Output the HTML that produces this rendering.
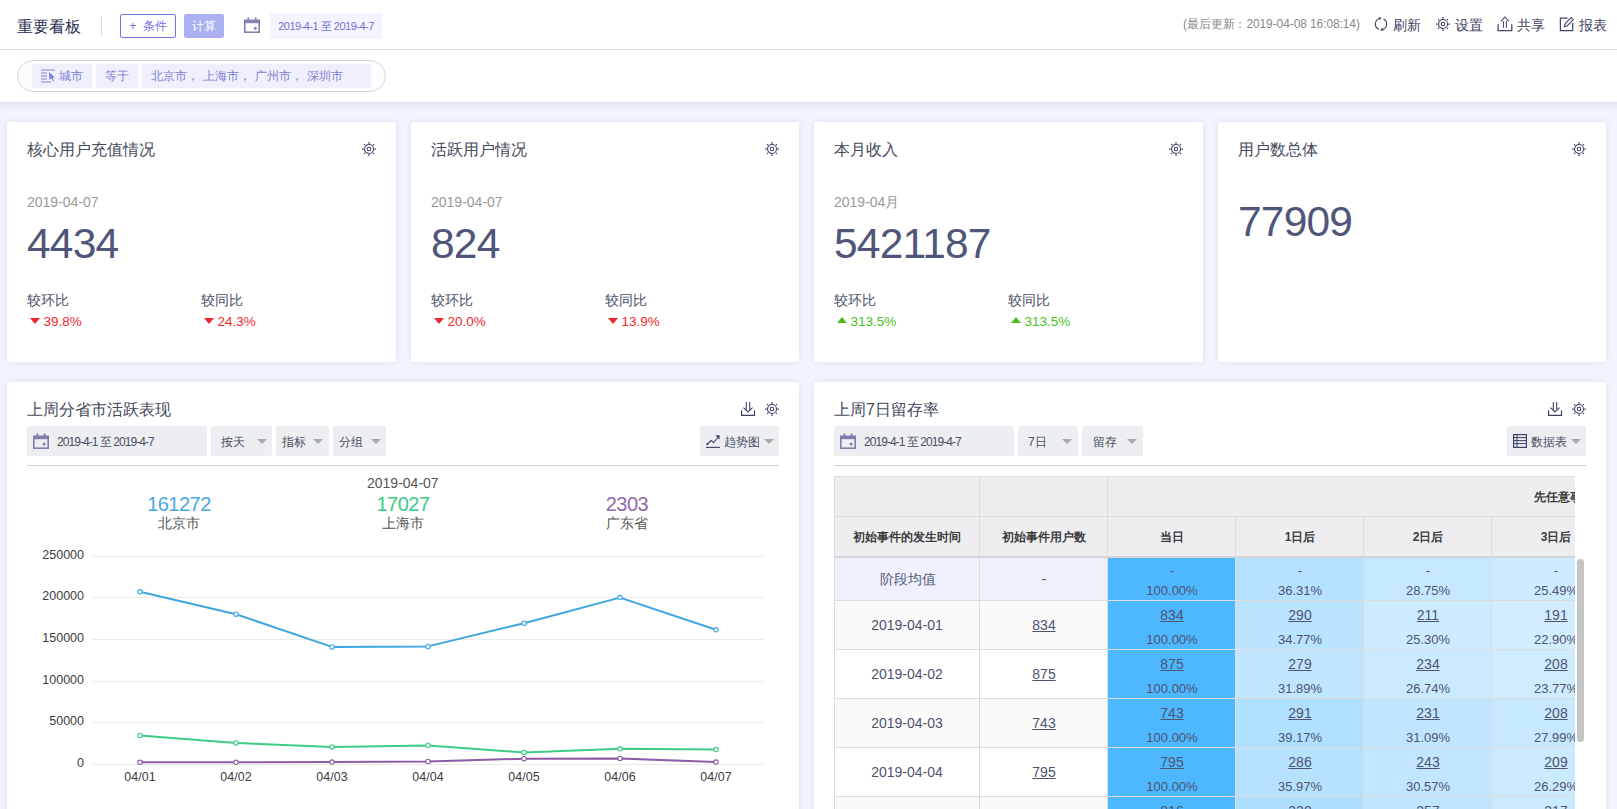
<!DOCTYPE html>
<html><head><meta charset="utf-8">
<style>
*{margin:0;padding:0;box-sizing:border-box}
html,body{width:1617px;height:809px;overflow:hidden}
body{background:#f2f5fd;font-family:"Liberation Sans",sans-serif;color:#333;position:relative}
.abs{position:absolute;white-space:nowrap}
#hdr{position:absolute;left:0;top:0;width:1617px;height:50px;background:#fff;border-bottom:1px solid #dcdce0}
#flt{position:absolute;left:0;top:50px;width:1617px;height:52px;background:#fff}
#shd{position:absolute;left:0;top:102px;width:1617px;height:20px;background:linear-gradient(#dde0e8 0px,#e8ebf3 3px,#f1f4fc 9px,#f2f5fd 14px)}
.card{position:absolute;background:#fff;border-radius:2px;box-shadow:0 0 6px rgba(200,205,225,.6)}
.ttl{position:absolute;font-size:16px;line-height:16px;color:#444a5c;white-space:nowrap}
.date{position:absolute;font-size:14px;line-height:14px;color:#999;white-space:nowrap}
.big{position:absolute;font-size:42.5px;line-height:42px;color:#50557a;white-space:nowrap;letter-spacing:-0.8px}
.lbl{position:absolute;font-size:14px;line-height:14px;color:#4c5068;white-space:nowrap}
.pct{position:absolute;font-size:13.5px;line-height:14px;white-space:nowrap}
.red{color:#f0282d}.grn{color:#4cbf1e}
.tri-d{position:absolute;width:0;height:0;border-left:5.5px solid transparent;border-right:5.5px solid transparent;border-top:6px solid #f0282d}
.tri-u{position:absolute;width:0;height:0;border-left:5.5px solid transparent;border-right:5.5px solid transparent;border-bottom:6px solid #4cbf1e}
.hact{position:absolute;top:17.5px;font-size:14px;line-height:14px;color:#3d4163}
.tag{position:absolute;top:14px;height:24px;background:#f0f0fd;border-radius:2px;color:#7c80d4;font-size:12px;line-height:24px}
.ctl{position:absolute;top:426px;height:30px;background:#eceef2;border-radius:2px;font-size:12px;line-height:30px;color:#4a4e62;white-space:nowrap}
.ctl span{position:absolute;top:1px}
.ctl .dd{position:absolute;top:13px;width:0;height:0;border-left:5px solid transparent;border-right:5px solid transparent;border-top:5px solid #aaa}
.dvd{position:absolute;top:465px;height:1px;background:#cfcfd4}
.ic{position:absolute;overflow:visible}
</style></head><body>
<div id="hdr">
<div class="abs" style="left:17px;top:18.5px;font-size:16px;line-height:16px;font-weight:500;color:#2d3052">重要看板</div>
<div class="abs" style="left:101px;top:16px;width:1px;height:20px;background:#d8d8d8"></div>
<div class="abs" style="left:120px;top:14px;width:56px;height:24px;border:1px solid #6f74e0;border-radius:2px;color:#6f74e0;font-size:12px;line-height:22px;text-align:center">+&nbsp; 条件</div>
<div class="abs" style="left:184px;top:14px;width:40px;height:24px;background:#aab0f2;border-radius:2px;color:#fff;font-size:12px;line-height:24px;text-align:center">计算</div>
<svg class="ic" style="left:244px;top:17px" width="16" height="16" viewBox="0 0 16 16"><rect x="0.8" y="3.3" width="14.4" height="11.9" fill="none" stroke="#8284b0" stroke-width="1.6"/><rect x="0.8" y="3" width="14.4" height="3.2" fill="#8284b0"/><rect x="3.5" y="0.3" width="1.6" height="3" fill="#8284b0"/><rect x="10.9" y="0.3" width="1.6" height="3" fill="#8284b0"/><rect x="10" y="10" width="2.6" height="2.6" fill="#8284b0"/></svg>
<div class="abs" style="left:270px;top:13px;width:112px;height:26px;background:#f3f4fd;color:#7570d8;font-size:11px;line-height:27px;text-align:center;letter-spacing:-0.5px">2019-4-1 至 2019-4-7</div>
<div class="abs" style="left:1183px;top:18px;font-size:12px;line-height:12px;color:#8a8a8a;letter-spacing:-0.1px">(最后更新：2019-04-08 16:08:14)</div>
<svg class="ic" style="left:1374px;top:17px" width="14" height="14" viewBox="0 0 14 14"><path d="M6.03 1.49A5.6 5.6 0 0 0 5.08 12.26M9.37 1.92A5.6 5.6 0 0 1 7.97 12.51" fill="none" stroke="#41456a" stroke-width="1.15"/><path d="M7.3 0.2L4.2 0.5L6.3 3.3Z M6.6 13.9L7.3 10.8L10 13.3Z" fill="#41456a"/></svg>
<div class="hact" style="left:1393px">刷新</div>
<svg class="ic" style="left:1436px;top:17px" width="14" height="14" viewBox="0 0 14 14"><circle cx="7" cy="7" r="4.5" fill="none" stroke="#3c4168" stroke-width="1.05"/><circle cx="7" cy="7" r="1.8" fill="none" stroke="#3c4168" stroke-width="1.05"/><g stroke="#3c4168" stroke-width="1.25"><path d="M7 0.1V1.7M7 12.3V13.9M0.1 7H1.7M12.3 7H13.9M2.1 2.1L3.1 3.1M10.9 10.9L11.9 11.9M2.1 11.9L3.1 10.9M10.9 3.1L11.9 2.1"/></g></svg>
<div class="hact" style="left:1455px">设置</div>
<svg class="ic" style="left:1497px;top:16px" width="15" height="15" viewBox="0 0 15 15"><path d="M1.1 8.2V14.7H14.8V8.2" fill="none" stroke="#41456a" stroke-width="1.25"/><path d="M6.4 5V11.8M9.4 5V11.8M3.9 5.4L7.9 1L11.9 5.4" fill="none" stroke="#41456a" stroke-width="1.05"/></svg>
<div class="hact" style="left:1517px">共享</div>
<svg class="ic" style="left:1559px;top:16px" width="15" height="15" viewBox="0 0 15 15"><path d="M8.6 2.2H1.4V14.7H13.7V7" fill="none" stroke="#41456a" stroke-width="1.25"/><path d="M5.3 10.6L6.2 7.6L12.2 1.6L14.3 3.7L8.3 9.7Z" fill="none" stroke="#41456a" stroke-width="1.05"/></svg>
<div class="hact" style="left:1579px">报表</div>
</div>
<div id="flt">
<div class="abs" style="left:17px;top:10px;width:369px;height:32px;border:1px solid #d6d6dc;border-radius:16px;background:#fcfcff"></div>
<div class="tag" style="left:32px;width:60px"><svg class="abs" style="left:9px;top:5px" width="15" height="14" viewBox="0 0 15 14"><path d="M0 1H14M0 4H6M0 7H6M0 10H6M0 13H10" stroke="#7c80d4" stroke-width="1.2"/><path d="M8 3L14 8.5L11.5 8.8L13 12L12 12.5L10.5 9.3L8.5 11Z" fill="#7c80d4"/></svg><span class="abs" style="left:27px;top:0">城市</span></div>
<div class="tag" style="left:96px;width:42px;text-align:center">等于</div>
<div class="tag" style="left:142px;width:229px;padding-left:9px">北京市<span style="letter-spacing:4px">，</span>上海市<span style="letter-spacing:4px">，</span>广州市<span style="letter-spacing:4px">，</span>深圳市</div>
</div>
<div id="shd"></div>
<div class="card" style="left:7px;top:122px;width:389px;height:240px">
<svg class="ic" style="left:355px;top:20px" width="14" height="14" viewBox="0 0 14 14"><circle cx="7" cy="7" r="4.5" fill="none" stroke="#3c4168" stroke-width="1.05"/><circle cx="7" cy="7" r="1.8" fill="none" stroke="#3c4168" stroke-width="1.05"/><g stroke="#3c4168" stroke-width="1.25"><path d="M7 0.1V1.7M7 12.3V13.9M0.1 7H1.7M12.3 7H13.9M2.1 2.1L3.1 3.1M10.9 10.9L11.9 11.9M2.1 11.9L3.1 10.9M10.9 3.1L11.9 2.1"/></g></svg>
<div class="ttl" style="left:20px;top:20px">核心用户充值情况</div>
<div class="date" style="left:20px;top:73px">2019-04-07</div>
<div class="big" style="left:20px;top:101px">4434</div>
<div class="lbl" style="left:20px;top:171px">较环比</div>
<div class="tri-d" style="left:23px;top:195.5px"></div><div class="pct red" style="left:36.5px;top:193px">39.8%</div>
<div class="lbl" style="left:194px;top:171px">较同比</div>
<div class="tri-d" style="left:197px;top:195.5px"></div><div class="pct red" style="left:210.5px;top:193px">24.3%</div>
</div>
<div class="card" style="left:411px;top:122px;width:388px;height:240px">
<svg class="ic" style="left:354px;top:20px" width="14" height="14" viewBox="0 0 14 14"><circle cx="7" cy="7" r="4.5" fill="none" stroke="#3c4168" stroke-width="1.05"/><circle cx="7" cy="7" r="1.8" fill="none" stroke="#3c4168" stroke-width="1.05"/><g stroke="#3c4168" stroke-width="1.25"><path d="M7 0.1V1.7M7 12.3V13.9M0.1 7H1.7M12.3 7H13.9M2.1 2.1L3.1 3.1M10.9 10.9L11.9 11.9M2.1 11.9L3.1 10.9M10.9 3.1L11.9 2.1"/></g></svg>
<div class="ttl" style="left:20px;top:20px">活跃用户情况</div>
<div class="date" style="left:20px;top:73px">2019-04-07</div>
<div class="big" style="left:20px;top:101px">824</div>
<div class="lbl" style="left:20px;top:171px">较环比</div>
<div class="tri-d" style="left:23px;top:195.5px"></div><div class="pct red" style="left:36.5px;top:193px">20.0%</div>
<div class="lbl" style="left:194px;top:171px">较同比</div>
<div class="tri-d" style="left:197px;top:195.5px"></div><div class="pct red" style="left:210.5px;top:193px">13.9%</div>
</div>
<div class="card" style="left:814px;top:122px;width:389px;height:240px">
<svg class="ic" style="left:355px;top:20px" width="14" height="14" viewBox="0 0 14 14"><circle cx="7" cy="7" r="4.5" fill="none" stroke="#3c4168" stroke-width="1.05"/><circle cx="7" cy="7" r="1.8" fill="none" stroke="#3c4168" stroke-width="1.05"/><g stroke="#3c4168" stroke-width="1.25"><path d="M7 0.1V1.7M7 12.3V13.9M0.1 7H1.7M12.3 7H13.9M2.1 2.1L3.1 3.1M10.9 10.9L11.9 11.9M2.1 11.9L3.1 10.9M10.9 3.1L11.9 2.1"/></g></svg>
<div class="ttl" style="left:20px;top:20px">本月收入</div>
<div class="date" style="left:20px;top:73px">2019-04月</div>
<div class="big" style="left:20px;top:101px">5421187</div>
<div class="lbl" style="left:20px;top:171px">较环比</div>
<div class="tri-u" style="left:22.5px;top:194.5px"></div><div class="pct grn" style="left:36.5px;top:193px">313.5%</div>
<div class="lbl" style="left:194px;top:171px">较同比</div>
<div class="tri-u" style="left:196.5px;top:194.5px"></div><div class="pct grn" style="left:210.5px;top:193px">313.5%</div>
</div>
<div class="card" style="left:1218px;top:122px;width:388px;height:240px">
<svg class="ic" style="left:354px;top:20px" width="14" height="14" viewBox="0 0 14 14"><circle cx="7" cy="7" r="4.5" fill="none" stroke="#3c4168" stroke-width="1.05"/><circle cx="7" cy="7" r="1.8" fill="none" stroke="#3c4168" stroke-width="1.05"/><g stroke="#3c4168" stroke-width="1.25"><path d="M7 0.1V1.7M7 12.3V13.9M0.1 7H1.7M12.3 7H13.9M2.1 2.1L3.1 3.1M10.9 10.9L11.9 11.9M2.1 11.9L3.1 10.9M10.9 3.1L11.9 2.1"/></g></svg>
<div class="ttl" style="left:20px;top:20px">用户数总体</div>
<div class="big" style="left:20px;top:79px">77909</div>
</div>
<div class="card" style="left:7px;top:382px;width:792px;height:440px"></div>
<div class="ttl" style="left:27px;top:402px">上周分省市活跃表现</div>
<svg class="ic" style="left:741px;top:402px" width="14" height="14" viewBox="0 0 14 14"><path d="M0.6 8.3V13.4H13.5V8.3" fill="none" stroke="#3c4168" stroke-width="1.2"/><path d="M5.3 0V7.6M8.7 0V7.6M2.4 5.6L7 10L11.6 5.6" fill="none" stroke="#3c4168" stroke-width="1.1"/></svg>
<svg class="ic" style="left:765px;top:402px" width="14" height="14" viewBox="0 0 14 14"><circle cx="7" cy="7" r="4.5" fill="none" stroke="#3c4168" stroke-width="1.05"/><circle cx="7" cy="7" r="1.8" fill="none" stroke="#3c4168" stroke-width="1.05"/><g stroke="#3c4168" stroke-width="1.25"><path d="M7 0.1V1.7M7 12.3V13.9M0.1 7H1.7M12.3 7H13.9M2.1 2.1L3.1 3.1M10.9 10.9L11.9 11.9M2.1 11.9L3.1 10.9M10.9 3.1L11.9 2.1"/></g></svg>
<div class="ctl" style="left:27px;width:180px"><svg class="ic" style="left:6px;top:7px" width="16" height="16" viewBox="0 0 16 16"><rect x="0.8" y="3.3" width="14.4" height="11.9" fill="none" stroke="#7d7fa8" stroke-width="1.6"/><rect x="0.8" y="3" width="14.4" height="3.2" fill="#7d7fa8"/><rect x="3.5" y="0.5" width="1.8" height="3" fill="#7d7fa8"/><rect x="10.7" y="0.5" width="1.8" height="3" fill="#7d7fa8"/><rect x="9.8" y="9.8" width="2.6" height="2.6" fill="#7d7fa8"/></svg><span style="left:30px;letter-spacing:-0.95px">2019-4-1 至 2019-4-7</span></div>
<div class="ctl" style="left:211px;width:61px"><span style="left:10px">按天</span><i class="dd" style="left:46px"></i></div>
<div class="ctl" style="left:276px;width:53px"><span style="left:6px">指标</span><i class="dd" style="left:37px"></i></div>
<div class="ctl" style="left:333px;width:53px"><span style="left:6px">分组</span><i class="dd" style="left:38px"></i></div>
<div class="ctl" style="left:700px;width:79px"><svg class="ic" style="left:6px;top:8px" width="14" height="14" viewBox="0 0 14 14"><path d="M0 13.4H14" stroke="#3c4168" stroke-width="1.1"/><path d="M1 10.5L5 6.5L7.5 8.5L12.5 3" fill="none" stroke="#3c4168" stroke-width="1.1"/><circle cx="1.2" cy="10.3" r="1" fill="#3c4168"/><path d="M9.3 1.2H13.6V5.5Z" fill="#3c4168"/></svg><span style="left:24px">趋势图</span><i class="dd" style="left:64px"></i></div>
<div class="dvd" style="left:27px;width:752px"></div>
<div class="abs" style="left:367px;top:476px;font-size:14px;line-height:14px;color:#555">2019-04-07</div>
<div class="abs" style="left:129px;top:494px;width:100px;text-align:center;font-size:20px;line-height:20px;color:#4aa8e2;letter-spacing:-0.5px">161272</div>
<div class="abs" style="left:129px;top:516px;width:100px;text-align:center;font-size:14px;line-height:14px;color:#555">北京市</div>
<div class="abs" style="left:353px;top:494px;width:100px;text-align:center;font-size:20px;line-height:20px;color:#3dcb86;letter-spacing:-0.5px">17027</div>
<div class="abs" style="left:353px;top:516px;width:100px;text-align:center;font-size:14px;line-height:14px;color:#555">上海市</div>
<div class="abs" style="left:577px;top:494px;width:100px;text-align:center;font-size:20px;line-height:20px;color:#8d6aa8;letter-spacing:-0.5px">2303</div>
<div class="abs" style="left:577px;top:516px;width:100px;text-align:center;font-size:14px;line-height:14px;color:#555">广东省</div>
<svg class="abs" style="left:0;top:0" width="810" height="809" viewBox="0 0 810 809">
<g font-family="Liberation Sans, sans-serif" font-size="12.5" fill="#3d3d3d"><text x="84" y="558.6" text-anchor="end">250000</text><text x="84" y="599.6" text-anchor="end">200000</text><text x="84" y="641.6" text-anchor="end">150000</text><text x="84" y="683.6" text-anchor="end">100000</text><text x="84" y="724.6" text-anchor="end">50000</text><text x="84" y="766.6" text-anchor="end">0</text><text x="140" y="780.5" text-anchor="middle">04/01</text><text x="236" y="780.5" text-anchor="middle">04/02</text><text x="332" y="780.5" text-anchor="middle">04/03</text><text x="428" y="780.5" text-anchor="middle">04/04</text><text x="524" y="780.5" text-anchor="middle">04/05</text><text x="620" y="780.5" text-anchor="middle">04/06</text><text x="716" y="780.5" text-anchor="middle">04/07</text></g>
<g><line x1="92" y1="556.5" x2="764" y2="556.5" stroke="#ebebeb" stroke-width="1"/><line x1="92" y1="597.5" x2="764" y2="597.5" stroke="#ebebeb" stroke-width="1"/><line x1="92" y1="639.5" x2="764" y2="639.5" stroke="#ebebeb" stroke-width="1"/><line x1="92" y1="681.5" x2="764" y2="681.5" stroke="#ebebeb" stroke-width="1"/><line x1="92" y1="722.5" x2="764" y2="722.5" stroke="#ebebeb" stroke-width="1"/><line x1="92" y1="764.5" x2="764" y2="764.5" stroke="#ebebeb" stroke-width="1"/></g>
<polyline points="140,762.3 236,762.3 332,762.1 428,761.5 524,758.7 620,758.4 716,762.1" fill="none" stroke="#8d5aa6" stroke-width="2" stroke-linejoin="round"/><circle cx="140" cy="762.3" r="2.2" fill="#fff" stroke="#8d5aa6" stroke-width="1.1"/><circle cx="236" cy="762.3" r="2.2" fill="#fff" stroke="#8d5aa6" stroke-width="1.1"/><circle cx="332" cy="762.1" r="2.2" fill="#fff" stroke="#8d5aa6" stroke-width="1.1"/><circle cx="428" cy="761.5" r="2.2" fill="#fff" stroke="#8d5aa6" stroke-width="1.1"/><circle cx="524" cy="758.7" r="2.2" fill="#fff" stroke="#8d5aa6" stroke-width="1.1"/><circle cx="620" cy="758.4" r="2.2" fill="#fff" stroke="#8d5aa6" stroke-width="1.1"/><circle cx="716" cy="762.1" r="2.2" fill="#fff" stroke="#8d5aa6" stroke-width="1.1"/><polyline points="140,735.4 236,742.9 332,746.9 428,745.5 524,752.4 620,748.8 716,749.6" fill="none" stroke="#3dcb86" stroke-width="2" stroke-linejoin="round"/><circle cx="140" cy="735.4" r="2.2" fill="#fff" stroke="#3dcb86" stroke-width="1.1"/><circle cx="236" cy="742.9" r="2.2" fill="#fff" stroke="#3dcb86" stroke-width="1.1"/><circle cx="332" cy="746.9" r="2.2" fill="#fff" stroke="#3dcb86" stroke-width="1.1"/><circle cx="428" cy="745.5" r="2.2" fill="#fff" stroke="#3dcb86" stroke-width="1.1"/><circle cx="524" cy="752.4" r="2.2" fill="#fff" stroke="#3dcb86" stroke-width="1.1"/><circle cx="620" cy="748.8" r="2.2" fill="#fff" stroke="#3dcb86" stroke-width="1.1"/><circle cx="716" cy="749.6" r="2.2" fill="#fff" stroke="#3dcb86" stroke-width="1.1"/><polyline points="140,591.8 236,614.2 332,646.9 428,646.4 524,623.2 620,597.6 716,629.8" fill="none" stroke="#3ea6df" stroke-width="2" stroke-linejoin="round"/><circle cx="140" cy="591.8" r="2.2" fill="#fff" stroke="#3ea6df" stroke-width="1.1"/><circle cx="236" cy="614.2" r="2.2" fill="#fff" stroke="#3ea6df" stroke-width="1.1"/><circle cx="332" cy="646.9" r="2.2" fill="#fff" stroke="#3ea6df" stroke-width="1.1"/><circle cx="428" cy="646.4" r="2.2" fill="#fff" stroke="#3ea6df" stroke-width="1.1"/><circle cx="524" cy="623.2" r="2.2" fill="#fff" stroke="#3ea6df" stroke-width="1.1"/><circle cx="620" cy="597.6" r="2.2" fill="#fff" stroke="#3ea6df" stroke-width="1.1"/><circle cx="716" cy="629.8" r="2.2" fill="#fff" stroke="#3ea6df" stroke-width="1.1"/>
</svg>
<div class="card" style="left:814px;top:382px;width:792px;height:440px"></div>
<div class="ttl" style="left:834px;top:402px">上周7日留存率</div>
<svg class="ic" style="left:1548px;top:402px" width="14" height="14" viewBox="0 0 14 14"><path d="M0.6 8.3V13.4H13.5V8.3" fill="none" stroke="#3c4168" stroke-width="1.2"/><path d="M5.3 0V7.6M8.7 0V7.6M2.4 5.6L7 10L11.6 5.6" fill="none" stroke="#3c4168" stroke-width="1.1"/></svg>
<svg class="ic" style="left:1572px;top:402px" width="14" height="14" viewBox="0 0 14 14"><circle cx="7" cy="7" r="4.5" fill="none" stroke="#3c4168" stroke-width="1.05"/><circle cx="7" cy="7" r="1.8" fill="none" stroke="#3c4168" stroke-width="1.05"/><g stroke="#3c4168" stroke-width="1.25"><path d="M7 0.1V1.7M7 12.3V13.9M0.1 7H1.7M12.3 7H13.9M2.1 2.1L3.1 3.1M10.9 10.9L11.9 11.9M2.1 11.9L3.1 10.9M10.9 3.1L11.9 2.1"/></g></svg>
<div class="ctl" style="left:834px;width:180px"><svg class="ic" style="left:6px;top:7px" width="16" height="16" viewBox="0 0 16 16"><rect x="0.8" y="3.3" width="14.4" height="11.9" fill="none" stroke="#7d7fa8" stroke-width="1.6"/><rect x="0.8" y="3" width="14.4" height="3.2" fill="#7d7fa8"/><rect x="3.5" y="0.5" width="1.8" height="3" fill="#7d7fa8"/><rect x="10.7" y="0.5" width="1.8" height="3" fill="#7d7fa8"/><rect x="9.8" y="9.8" width="2.6" height="2.6" fill="#7d7fa8"/></svg><span style="left:30px;letter-spacing:-0.95px">2019-4-1 至 2019-4-7</span></div>
<div class="ctl" style="left:1018px;width:60px"><span style="left:10px">7日</span><i class="dd" style="left:44px"></i></div>
<div class="ctl" style="left:1082px;width:61px"><span style="left:11px">留存</span><i class="dd" style="left:45px"></i></div>
<div class="ctl" style="left:1507px;width:79px"><svg class="ic" style="left:6px;top:8px" width="14" height="14" viewBox="0 0 14 14"><rect x="0.6" y="0.6" width="12.8" height="12.8" fill="none" stroke="#3c4168" stroke-width="1.2"/><path d="M0.6 3.6H13.4M0.6 6.6H13.4M0.6 9.6H13.4M4 0.6V13.4" stroke="#3c4168" stroke-width="1"/></svg><span style="left:24px">数据表</span><i class="dd" style="left:64px"></i></div>
<div class="dvd" style="left:834px;width:752px"></div>
<div class="abs" style="left:834px;top:476px;width:741px;height:340px;overflow:hidden">
<div class="abs" style="left:0px;top:0px;width:785px;height:82px;background:#eeeef1"></div>
<div class="abs" style="left:0px;top:82px;width:273px;height:42px;background:#eef0fc"></div>
<div class="abs" style="left:273px;top:82px;width:128px;height:42px;background:#4db8ff"></div>
<div class="abs" style="left:401px;top:82px;width:128px;height:42px;background:rgb(182,226,255)"></div>
<div class="abs" style="left:529px;top:82px;width:128px;height:42px;background:rgb(197,232,255)"></div>
<div class="abs" style="left:657px;top:82px;width:128px;height:42px;background:rgb(204,235,255)"></div>
<div class="abs" style="left:0px;top:124px;width:273px;height:49px;background:#fafafa"></div>
<div class="abs" style="left:273px;top:124px;width:128px;height:49px;background:#4db8ff"></div>
<div class="abs" style="left:401px;top:124px;width:128px;height:49px;background:rgb(185,227,255)"></div>
<div class="abs" style="left:529px;top:124px;width:128px;height:49px;background:rgb(204,235,255)"></div>
<div class="abs" style="left:657px;top:124px;width:128px;height:49px;background:rgb(209,237,255)"></div>
<div class="abs" style="left:0px;top:173px;width:273px;height:49px;background:#fff"></div>
<div class="abs" style="left:273px;top:173px;width:128px;height:49px;background:#4db8ff"></div>
<div class="abs" style="left:401px;top:173px;width:128px;height:49px;background:rgb(191,229,255)"></div>
<div class="abs" style="left:529px;top:173px;width:128px;height:49px;background:rgb(201,234,255)"></div>
<div class="abs" style="left:657px;top:173px;width:128px;height:49px;background:rgb(207,236,255)"></div>
<div class="abs" style="left:0px;top:222px;width:273px;height:49px;background:#fafafa"></div>
<div class="abs" style="left:273px;top:222px;width:128px;height:49px;background:#4db8ff"></div>
<div class="abs" style="left:401px;top:222px;width:128px;height:49px;background:rgb(176,224,255)"></div>
<div class="abs" style="left:529px;top:222px;width:128px;height:49px;background:rgb(192,230,255)"></div>
<div class="abs" style="left:657px;top:222px;width:128px;height:49px;background:rgb(199,233,255)"></div>
<div class="abs" style="left:0px;top:271px;width:273px;height:49px;background:#fff"></div>
<div class="abs" style="left:273px;top:271px;width:128px;height:49px;background:#4db8ff"></div>
<div class="abs" style="left:401px;top:271px;width:128px;height:49px;background:rgb(183,226,255)"></div>
<div class="abs" style="left:529px;top:271px;width:128px;height:49px;background:rgb(194,230,255)"></div>
<div class="abs" style="left:657px;top:271px;width:128px;height:49px;background:rgb(202,234,255)"></div>
<div class="abs" style="left:0px;top:320px;width:273px;height:49px;background:#fafafa"></div>
<div class="abs" style="left:273px;top:320px;width:128px;height:49px;background:#4db8ff"></div>
<div class="abs" style="left:401px;top:320px;width:128px;height:49px;background:rgb(174,223,255)"></div>
<div class="abs" style="left:529px;top:320px;width:128px;height:49px;background:rgb(192,230,255)"></div>
<div class="abs" style="left:657px;top:320px;width:128px;height:49px;background:rgb(202,234,255)"></div>
<div class="abs" style="left:0;top:0px;width:785px;height:1px;background:#dcdcdc"></div>
<div class="abs" style="left:0;top:40px;width:785px;height:1px;background:#dcdcdc"></div>
<div class="abs" style="left:0;top:124px;width:785px;height:1px;background:#dcdcdc"></div>
<div class="abs" style="left:0;top:173px;width:785px;height:1px;background:#dcdcdc"></div>
<div class="abs" style="left:0;top:222px;width:785px;height:1px;background:#dcdcdc"></div>
<div class="abs" style="left:0;top:271px;width:785px;height:1px;background:#dcdcdc"></div>
<div class="abs" style="left:0;top:320px;width:785px;height:1px;background:#dcdcdc"></div>
<div class="abs" style="left:0;top:80px;width:785px;height:2px;background:#d4d4d4"></div>
<div class="abs" style="left:0px;top:0;width:1px;height:340px;background:#dcdcdc"></div>
<div class="abs" style="left:145px;top:0;width:1px;height:340px;background:#dcdcdc"></div>
<div class="abs" style="left:273px;top:0;width:1px;height:340px;background:#dcdcdc"></div>
<div class="abs" style="left:401px;top:40px;width:1px;height:300px;background:#dcdcdc"></div>
<div class="abs" style="left:529px;top:40px;width:1px;height:300px;background:#dcdcdc"></div>
<div class="abs" style="left:657px;top:40px;width:1px;height:300px;background:#dcdcdc"></div>
<div class="abs" style="left:12.5px;top:55.0px;width:120px;text-align:center;font-size:12px;line-height:12px;color:#3c3c3c;font-weight:bold;">初始事件的发生时间</div>
<div class="abs" style="left:150px;top:55.0px;width:120px;text-align:center;font-size:12px;line-height:12px;color:#3c3c3c;font-weight:bold;">初始事件用户数</div>
<div class="abs" style="left:278px;top:55.0px;width:120px;text-align:center;font-size:12px;line-height:12px;color:#3c3c3c;font-weight:bold;">当日</div>
<div class="abs" style="left:406px;top:55.0px;width:120px;text-align:center;font-size:12px;line-height:12px;color:#3c3c3c;font-weight:bold;">1日后</div>
<div class="abs" style="left:534px;top:55.0px;width:120px;text-align:center;font-size:12px;line-height:12px;color:#3c3c3c;font-weight:bold;">2日后</div>
<div class="abs" style="left:662px;top:55.0px;width:120px;text-align:center;font-size:12px;line-height:12px;color:#3c3c3c;font-weight:bold;">3日后</div>
<div class="abs" style="left:700px;top:14.5px;font-size:12px;line-height:12px;font-weight:bold;color:#3c3c3c">先任意事件</div>
<div class="abs" style="left:14px;top:96.0px;width:120px;text-align:center;font-size:14px;line-height:14px;color:#55597c;">阶段均值</div>
<div class="abs" style="left:150px;top:96.0px;width:120px;text-align:center;font-size:14px;line-height:14px;color:#555;">-</div>
<div class="abs" style="left:278px;top:87.5px;width:120px;text-align:center;font-size:13px;line-height:13px;color:#4e5370;">-</div>
<div class="abs" style="left:278px;top:107.5px;width:120px;text-align:center;font-size:13px;line-height:13px;color:#4e5370;">100.00%</div>
<div class="abs" style="left:406px;top:87.5px;width:120px;text-align:center;font-size:13px;line-height:13px;color:#4e5370;">-</div>
<div class="abs" style="left:406px;top:107.5px;width:120px;text-align:center;font-size:13px;line-height:13px;color:#4e5370;">36.31%</div>
<div class="abs" style="left:534px;top:87.5px;width:120px;text-align:center;font-size:13px;line-height:13px;color:#4e5370;">-</div>
<div class="abs" style="left:534px;top:107.5px;width:120px;text-align:center;font-size:13px;line-height:13px;color:#4e5370;">28.75%</div>
<div class="abs" style="left:662px;top:87.5px;width:120px;text-align:center;font-size:13px;line-height:13px;color:#4e5370;">-</div>
<div class="abs" style="left:662px;top:107.5px;width:120px;text-align:center;font-size:13px;line-height:13px;color:#4e5370;">25.49%</div>
<div class="abs" style="left:13px;top:142.0px;width:120px;text-align:center;font-size:14px;line-height:14px;color:#4e5370;">2019-04-01</div>
<div class="abs" style="left:150px;top:142.0px;width:120px;text-align:center;font-size:14px;line-height:14px;color:#4e5370;text-decoration:underline;">834</div>
<div class="abs" style="left:278px;top:132.0px;width:120px;text-align:center;font-size:14px;line-height:14px;color:#4e5370;text-decoration:underline;">834</div>
<div class="abs" style="left:278px;top:156.5px;width:120px;text-align:center;font-size:13px;line-height:13px;color:#4e5370;">100.00%</div>
<div class="abs" style="left:406px;top:132.0px;width:120px;text-align:center;font-size:14px;line-height:14px;color:#4e5370;text-decoration:underline;">290</div>
<div class="abs" style="left:406px;top:156.5px;width:120px;text-align:center;font-size:13px;line-height:13px;color:#4e5370;">34.77%</div>
<div class="abs" style="left:534px;top:132.0px;width:120px;text-align:center;font-size:14px;line-height:14px;color:#4e5370;text-decoration:underline;">211</div>
<div class="abs" style="left:534px;top:156.5px;width:120px;text-align:center;font-size:13px;line-height:13px;color:#4e5370;">25.30%</div>
<div class="abs" style="left:662px;top:132.0px;width:120px;text-align:center;font-size:14px;line-height:14px;color:#4e5370;text-decoration:underline;">191</div>
<div class="abs" style="left:662px;top:156.5px;width:120px;text-align:center;font-size:13px;line-height:13px;color:#4e5370;">22.90%</div>
<div class="abs" style="left:13px;top:191.0px;width:120px;text-align:center;font-size:14px;line-height:14px;color:#4e5370;">2019-04-02</div>
<div class="abs" style="left:150px;top:191.0px;width:120px;text-align:center;font-size:14px;line-height:14px;color:#4e5370;text-decoration:underline;">875</div>
<div class="abs" style="left:278px;top:181.0px;width:120px;text-align:center;font-size:14px;line-height:14px;color:#4e5370;text-decoration:underline;">875</div>
<div class="abs" style="left:278px;top:205.5px;width:120px;text-align:center;font-size:13px;line-height:13px;color:#4e5370;">100.00%</div>
<div class="abs" style="left:406px;top:181.0px;width:120px;text-align:center;font-size:14px;line-height:14px;color:#4e5370;text-decoration:underline;">279</div>
<div class="abs" style="left:406px;top:205.5px;width:120px;text-align:center;font-size:13px;line-height:13px;color:#4e5370;">31.89%</div>
<div class="abs" style="left:534px;top:181.0px;width:120px;text-align:center;font-size:14px;line-height:14px;color:#4e5370;text-decoration:underline;">234</div>
<div class="abs" style="left:534px;top:205.5px;width:120px;text-align:center;font-size:13px;line-height:13px;color:#4e5370;">26.74%</div>
<div class="abs" style="left:662px;top:181.0px;width:120px;text-align:center;font-size:14px;line-height:14px;color:#4e5370;text-decoration:underline;">208</div>
<div class="abs" style="left:662px;top:205.5px;width:120px;text-align:center;font-size:13px;line-height:13px;color:#4e5370;">23.77%</div>
<div class="abs" style="left:13px;top:240.0px;width:120px;text-align:center;font-size:14px;line-height:14px;color:#4e5370;">2019-04-03</div>
<div class="abs" style="left:150px;top:240.0px;width:120px;text-align:center;font-size:14px;line-height:14px;color:#4e5370;text-decoration:underline;">743</div>
<div class="abs" style="left:278px;top:230.0px;width:120px;text-align:center;font-size:14px;line-height:14px;color:#4e5370;text-decoration:underline;">743</div>
<div class="abs" style="left:278px;top:254.5px;width:120px;text-align:center;font-size:13px;line-height:13px;color:#4e5370;">100.00%</div>
<div class="abs" style="left:406px;top:230.0px;width:120px;text-align:center;font-size:14px;line-height:14px;color:#4e5370;text-decoration:underline;">291</div>
<div class="abs" style="left:406px;top:254.5px;width:120px;text-align:center;font-size:13px;line-height:13px;color:#4e5370;">39.17%</div>
<div class="abs" style="left:534px;top:230.0px;width:120px;text-align:center;font-size:14px;line-height:14px;color:#4e5370;text-decoration:underline;">231</div>
<div class="abs" style="left:534px;top:254.5px;width:120px;text-align:center;font-size:13px;line-height:13px;color:#4e5370;">31.09%</div>
<div class="abs" style="left:662px;top:230.0px;width:120px;text-align:center;font-size:14px;line-height:14px;color:#4e5370;text-decoration:underline;">208</div>
<div class="abs" style="left:662px;top:254.5px;width:120px;text-align:center;font-size:13px;line-height:13px;color:#4e5370;">27.99%</div>
<div class="abs" style="left:13px;top:289.0px;width:120px;text-align:center;font-size:14px;line-height:14px;color:#4e5370;">2019-04-04</div>
<div class="abs" style="left:150px;top:289.0px;width:120px;text-align:center;font-size:14px;line-height:14px;color:#4e5370;text-decoration:underline;">795</div>
<div class="abs" style="left:278px;top:279.0px;width:120px;text-align:center;font-size:14px;line-height:14px;color:#4e5370;text-decoration:underline;">795</div>
<div class="abs" style="left:278px;top:303.5px;width:120px;text-align:center;font-size:13px;line-height:13px;color:#4e5370;">100.00%</div>
<div class="abs" style="left:406px;top:279.0px;width:120px;text-align:center;font-size:14px;line-height:14px;color:#4e5370;text-decoration:underline;">286</div>
<div class="abs" style="left:406px;top:303.5px;width:120px;text-align:center;font-size:13px;line-height:13px;color:#4e5370;">35.97%</div>
<div class="abs" style="left:534px;top:279.0px;width:120px;text-align:center;font-size:14px;line-height:14px;color:#4e5370;text-decoration:underline;">243</div>
<div class="abs" style="left:534px;top:303.5px;width:120px;text-align:center;font-size:13px;line-height:13px;color:#4e5370;">30.57%</div>
<div class="abs" style="left:662px;top:279.0px;width:120px;text-align:center;font-size:14px;line-height:14px;color:#4e5370;text-decoration:underline;">209</div>
<div class="abs" style="left:662px;top:303.5px;width:120px;text-align:center;font-size:13px;line-height:13px;color:#4e5370;">26.29%</div>
<div class="abs" style="left:13px;top:338.0px;width:120px;text-align:center;font-size:14px;line-height:14px;color:#4e5370;">2019-04-05</div>
<div class="abs" style="left:150px;top:338.0px;width:120px;text-align:center;font-size:14px;line-height:14px;color:#4e5370;text-decoration:underline;">816</div>
<div class="abs" style="left:278px;top:328.0px;width:120px;text-align:center;font-size:14px;line-height:14px;color:#4e5370;text-decoration:underline;">816</div>
<div class="abs" style="left:278px;top:352.5px;width:120px;text-align:center;font-size:13px;line-height:13px;color:#4e5370;">100.00%</div>
<div class="abs" style="left:406px;top:328.0px;width:120px;text-align:center;font-size:14px;line-height:14px;color:#4e5370;text-decoration:underline;">330</div>
<div class="abs" style="left:406px;top:352.5px;width:120px;text-align:center;font-size:13px;line-height:13px;color:#4e5370;">40.44%</div>
<div class="abs" style="left:534px;top:328.0px;width:120px;text-align:center;font-size:14px;line-height:14px;color:#4e5370;text-decoration:underline;">257</div>
<div class="abs" style="left:534px;top:352.5px;width:120px;text-align:center;font-size:13px;line-height:13px;color:#4e5370;">31.50%</div>
<div class="abs" style="left:662px;top:328.0px;width:120px;text-align:center;font-size:14px;line-height:14px;color:#4e5370;text-decoration:underline;">217</div>
<div class="abs" style="left:662px;top:352.5px;width:120px;text-align:center;font-size:13px;line-height:13px;color:#4e5370;">26.59%</div>
</div>
<div class="abs" style="left:1577px;top:559px;width:7px;height:183px;background:#c4c4c4;border-radius:4px"></div>
</body></html>
